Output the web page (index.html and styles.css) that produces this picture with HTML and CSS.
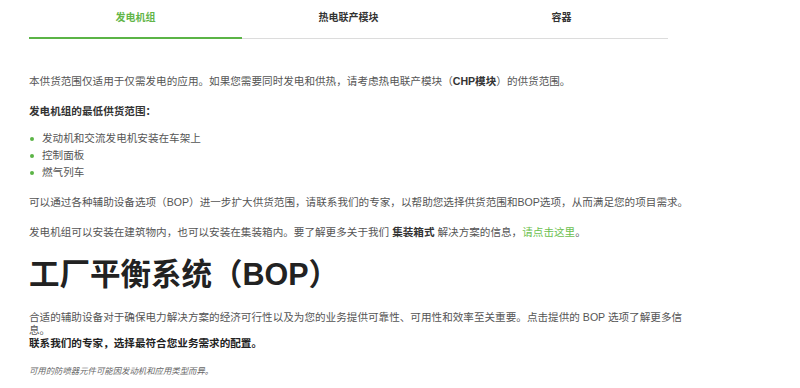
FILE: index.html
```html
<!DOCTYPE html>
<html lang="zh-CN">
<head>
    <meta charset="UTF-8">
    <meta name="viewport" content="width=device-width, initial-scale=1.0">
    <title>发电机组</title>
    <link rel="stylesheet" href="styles.css">
</head>
<body>

    <div class="page">
        <!-- 选项卡 -->
        <nav class="tabs">
            <a class="tab active" href="#">发电机组</a>
            <a class="tab" href="#">热电联产模块</a>
            <a class="tab" href="#">容器</a>
        </nav>

        <section class="content">
            <p class="intro">本供货范围仅适用于仅需发电的应用。如果您需要同时发电和供热，请考虑热电联产模块（<strong>CHP模块</strong>）的供货范围。</p>

            <h3 class="sub-title">发电机组的最低供货范围：</h3>
            <ul class="scope-list">
                <li>发动机和交流发电机安装在车架上</li>
                <li>控制面板</li>
                <li>燃气列车</li>
            </ul>

            <p>可以通过各种辅助设备选项（BOP）进一步扩大供货范围，请联系我们的专家，以帮助您选择供货范围和BOP选项，从而满足您的项目需求。</p>

            <p>发电机组可以安装在建筑物内，也可以安装在集装箱内。要了解更多关于我们 <strong>集装箱式</strong> 解决方案的信息，<a class="link" href="#">请点击这里</a>。</p>
        </section>

        <section class="bop">
            <h1 class="bop-title">工厂平衡系统（BOP）</h1>
            <p class="bop-text">合适的辅助设备对于确保电力解决方案的经济可行性以及为您的业务提供可靠性、可用性和效率至关重要。点击提供的 BOP 选项了解更多信息。<br><strong>联系我们的专家，选择最符合您业务需求的配置。</strong></p>
            <p class="note">可用的防喷器元件可能因发动机和应用类型而异。</p>
        </section>
    </div>

</body>
</html>
```

FILE: styles.css
```css
body, html {
    margin: 0;
    padding: 0;
    background-color: #ffffff;
}

body {
    font-family: "Liberation Sans", "Noto Sans CJK SC", sans-serif;
    font-size: 10.6px;
    color: #555;
}

.page {
    width: 660px;
    padding-left: 29px;
}

/* 选项卡 */
.tabs {
    display: flex;
    width: 639px;
    border-bottom: 1px solid #dcdcdc;
}

.tab {
    flex: 1;
    text-align: center;
    padding: 11px 0 12px;
    font-size: 10px;
    font-weight: bold;
    line-height: 14px;
    color: #333;
    text-decoration: none;
    margin-bottom: -1px;
    border-bottom: 2px solid transparent;
}

.tab.active {
    color: #62b548;
    border-bottom-color: #5bb446;
}

/* 内容 */
.content {
    padding-top: 35px;
}

.content p {
    margin: 0 0 15px;
    line-height: 15px;
}

.content strong {
    color: #333;
}

.sub-title {
    margin: 0 0 11px;
    font-size: 10.6px;
    line-height: 15px;
    color: #333;
}

.scope-list {
    margin: 0 0 14px;
    padding: 0;
    list-style: none;
}

.scope-list li {
    position: relative;
    padding-left: 13px;
    line-height: 17px;
}

.scope-list li::before {
    content: "";
    position: absolute;
    left: 1px;
    top: 7px;
    width: 4px;
    height: 4px;
    border-radius: 50%;
    background-color: #5bb446;
}

.link {
    color: #6cbf50;
    text-decoration: none;
}

/* BOP */
.bop-title {
    margin: 16px 0 19px;
    font-size: 30.5px;
    line-height: 36px;
    font-weight: bold;
    color: #222;
}

.bop-text {
    max-width: 654px;
    margin: 0 0 14px;
    line-height: 12.5px;
}

.bop-text strong {
    color: #222;
    line-height: 14px;
}

.note {
    margin: 0;
    font-size: 8.4px;
    font-style: italic;
    color: #666;
}
```
